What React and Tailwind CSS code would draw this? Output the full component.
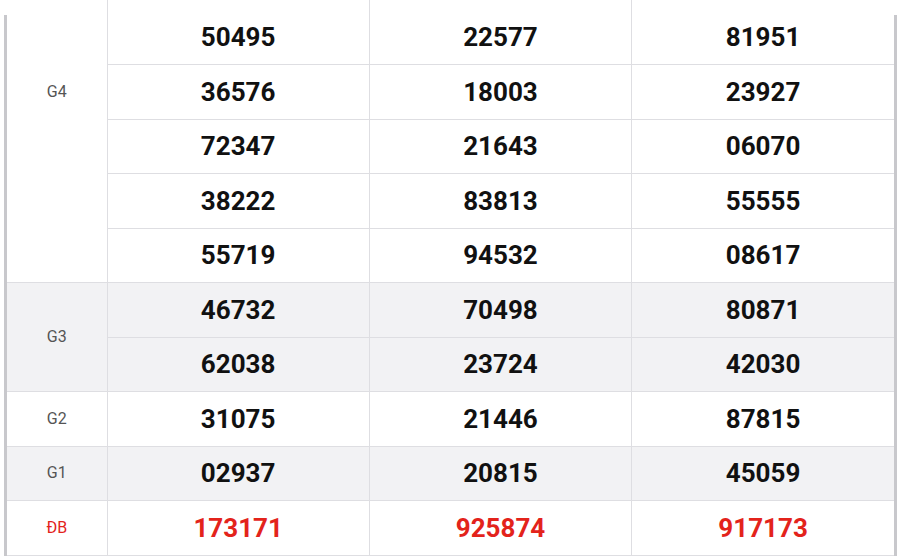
import React from 'react';

// first two G4 rows are scrolled out of view above the top edge
const ROWS = [
  { label: 'G4', gray: false, nums: [null, null, ['50495', '22577', '81951'], ['36576', '18003', '23927'], ['72347', '21643', '06070'], ['38222', '83813', '55555'], ['55719', '94532', '08617']] },
  { label: 'G3', gray: true, nums: [['46732', '70498', '80871'], ['62038', '23724', '42030']] },
  { label: 'G2', gray: false, nums: [['31075', '21446', '87815']] },
  { label: 'G1', gray: true, nums: [['02937', '20815', '45059']] },
  { label: 'ĐB', gray: false, red: true, nums: [['173171', '925874', '917173']] },
];

const App = () => {
  return (
    <div className="relative w-[900px] h-[560px] bg-white overflow-hidden" style={{ fontFamily: 'Roboto, "Liberation Sans", sans-serif' }}>
      <div className="-mt-[99px] ml-[4px] w-[893px] border-x-[3px] border-[#c8c8cc]">
        <table className="w-full border-collapse table-fixed">
          <colgroup>
            <col className="w-[100px]" />
            <col />
            <col />
            <col />
          </colgroup>
          <tbody>
            {ROWS.map((g) =>
              g.nums.map((row, i) => (
                <tr
                  key={g.label + i}
                  className={`h-[54.5px] ${row ? 'border-b border-[#dedee2]' : ''} ${g.gray ? 'bg-[#f2f2f4]' : 'bg-white'}`}
                >
                  {i === 0 && (
                    <td
                      rowSpan={g.nums.length}
                      className={`border-r border-[#dedee2] text-center text-[16px] ${g.red ? 'text-[#e3231b]' : 'text-[#555]'}`}
                    >
                      {g.label}
                    </td>
                  )}
                  {(row || ['', '', '']).map((n, j) => (
                    <td
                      key={j}
                      className={`text-center text-[26px] font-bold leading-none ${j < 2 ? 'border-r border-[#dedee2]' : ''} ${g.red ? 'text-[#e3231b]' : 'text-[#111]'}`}
                    >
                      {n}
                    </td>
                  ))}
                </tr>
              ))
            )}
          </tbody>
        </table>
      </div>
      <div className="absolute left-0 top-0 w-[9px] h-[15px] bg-white" />
      <div className="absolute right-0 top-0 w-[8px] h-[15px] bg-white" />
    </div>
  );
};

export default App;
